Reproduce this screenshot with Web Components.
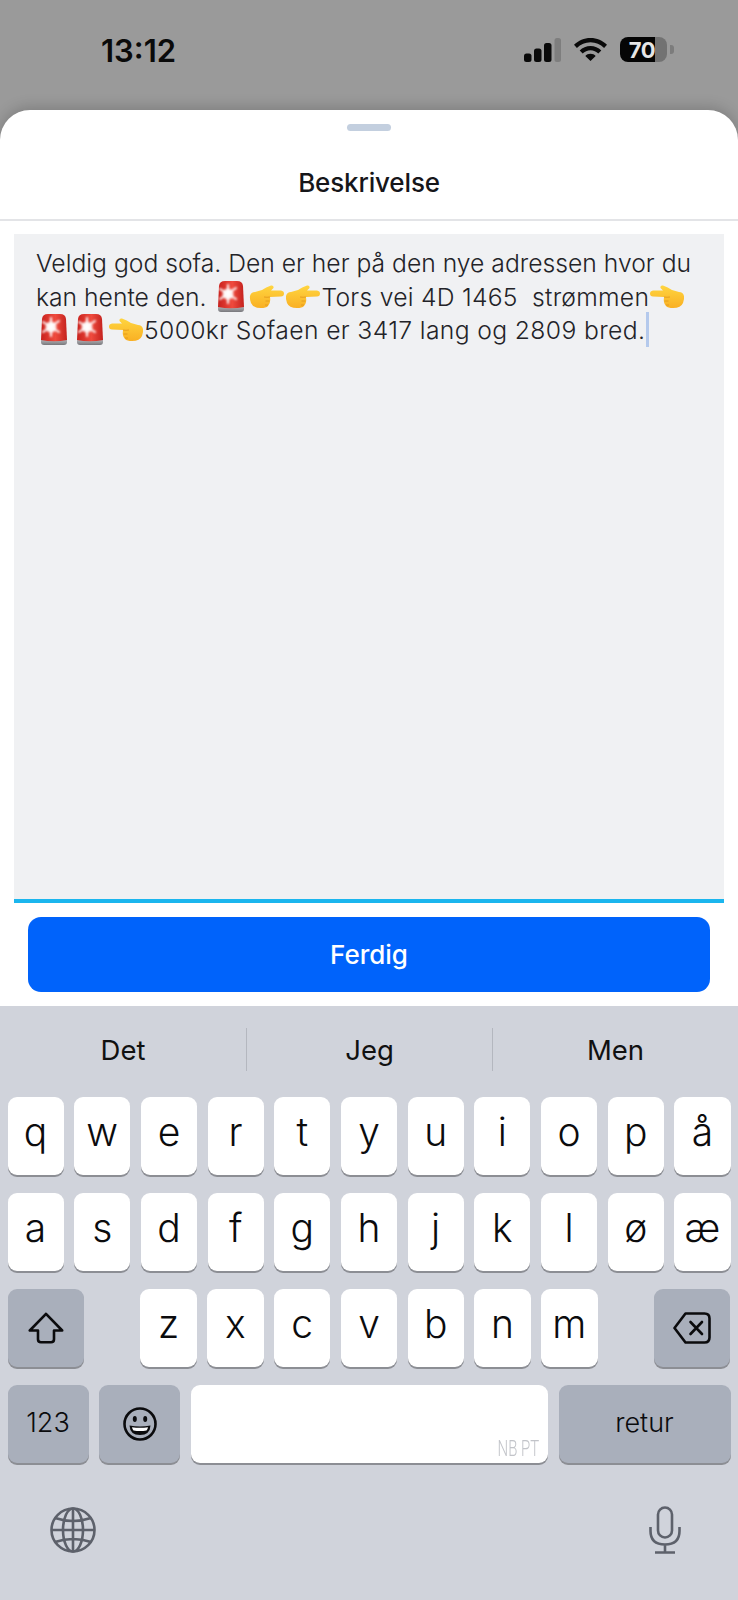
<!DOCTYPE html>
<html lang="nb">
<head>
<meta charset="utf-8">
<title>Beskrivelse</title>
<style>
  html, body { margin: 0; padding: 0; }
  body { width: 738px; height: 1600px; overflow: hidden; background: #9a9a9a; font-family: Inter, "Noto Sans", sans-serif; }
  app-screen { width: 738px; height: 1600px; }
</style>
</head>
<body>
<app-screen>
  <status-bar slot="status" time="13:12" battery="70"></status-bar>
  <bottom-sheet slot="sheet" heading="Beskrivelse" action="Ferdig">
    Veldig god sofa. Den er her på den nye adressen hvor du<br>kan hente den. <chat-emoji name="siren"></chat-emoji><chat-emoji name="right"></chat-emoji><chat-emoji name="right"></chat-emoji><span style="letter-spacing: .25px">Tors vei 4D 1465 &nbsp;strømmen</span><chat-emoji name="left"></chat-emoji><br><chat-emoji name="siren"></chat-emoji><chat-emoji name="siren"></chat-emoji><chat-emoji name="left"></chat-emoji><span style="letter-spacing: .37px">5000kr Sofaen er 3417 lang og 2809 bred.</span><text-caret></text-caret>
  </bottom-sheet>
  <ios-keyboard slot="keyboard"></ios-keyboard>
</app-screen>

<script>
const HAND = `
  <defs>
    <linearGradient id="skin" x1="0" x2="0" y1="0" y2="1">
      <stop offset="0" stop-color="#ffd53f"/><stop offset="1" stop-color="#f9b024"/>
    </linearGradient>
  </defs>
  <path d="M1 17Q2 13 6 13L13 11Q17 8 22 6.500Q25 6 24.500 9L22 11.500H32Q35 12 35 14.500Q35 17.500 32 17.500L21 18Q22 24 19 27Q17 29 12 29Q4 29 2 24Q.500 20 1 17z" fill="url(#skin)"/>
  <path d="M21 18q-3 .500-6 0M20.500 22h-4M19 26h-3" stroke="#e0941a" stroke-width=".8" fill="none"/>`

const EMOJI = {
  siren: `
    <svg viewBox="0 0 36 36" width="36" height="36">
      <defs>
        <linearGradient id="dome" x1="0" x2="1" y1="0" y2="0">
          <stop offset="0" stop-color="#c8211d"/><stop offset=".55" stop-color="#ef4a3d"/><stop offset="1" stop-color="#c4221e"/>
        </linearGradient>
        <linearGradient id="base" x1="0" x2="0" y1="0" y2="1">
          <stop offset="0" stop-color="#c9c9cc"/><stop offset="1" stop-color="#77777b"/>
        </linearGradient>
        <filter id="soft" x="-30%" y="-30%" width="160%" height="160%"><feGaussianBlur stdDeviation=".9"/></filter>
      </defs>
      <path d="M5 26v4q0 3 3 3h20q3 0 3-3v-4z" fill="url(#base)"/>
      <path d="M5 28 6 7Q6.500 2 12 2H24Q29.500 2 30 7L31 28Q18 30.500 5 28z" fill="url(#dome)"/>
      <g filter="url(#soft)">
        <circle cx="15" cy="15" r="5.500" fill="#fff" opacity=".9"/>
        <path d="M15 6v18M7 10l16 10M23 9 7 20" stroke="#fff" stroke-width="2" stroke-linecap="round"/>
      </g>
    </svg>`,
  right: `<svg viewBox="0 0 36 36" width="36" height="36">${HAND}</svg>`,
  left: `<svg viewBox="0 0 36 36" width="36" height="36"><g transform="matrix(-1 0 0 1 36 0)">${HAND}</g></svg>`
}

const KEY_ICONS = {
  shift: `
    <svg viewBox="0 0 36 32" width="36" height="32" fill="none" stroke="#0b0b0d" stroke-width="2.600" stroke-linejoin="round">
      <path d="M18 1.800 1.800 18.500H10v8.700q0 3 3 3h10q3 0 3-3v-8.700h8.200z"/>
    </svg>`,
  backspace: `
    <svg viewBox="0 0 38 32" width="38" height="32" fill="none" stroke="#0b0b0d" stroke-width="2.600" stroke-linejoin="round" stroke-linecap="round">
      <path d="M12.500 1.500h19q5 0 5 5v19q0 5-5 5h-19L1.500 16z"/>
      <path d="M17.500 10 29 22M29 10 17.500 22"/>
    </svg>`,
  emoji: `
    <svg viewBox="0 0 34 34" width="34" height="34">
      <circle cx="17" cy="17" r="15.500" fill="none" stroke="#0b0b0d" stroke-width="2.600"/>
      <ellipse cx="11.800" cy="12" rx="2" ry="3" fill="#0b0b0d"/>
      <ellipse cx="22.200" cy="12" rx="2" ry="3" fill="#0b0b0d"/>
      <path d="M6.500 18.500q10.500 2 21 0q-.5 9.500-10.500 9.500t-10.500-9.500z" fill="#0b0b0d"/>
      <path d="M9 20.200q8 1.300 16 0q-.5 2.600-1.500 3.300q-6.500 1-13 0q-1-.7-1.500-3.300z" fill="#fff"/>
    </svg>`,
  globe: `
    <svg viewBox="0 0 46 46" width="46" height="46" fill="none" stroke="#5d616b" stroke-width="2.600">
      <circle cx="23" cy="23" r="21.500"/>
      <ellipse cx="23" cy="23" rx="10" ry="21.500"/>
      <path d="M23 1.500v43M1.500 23h43M5 11q18 6 36 0M5 35q18-6 36 0"/>
    </svg>`,
  mic: `
    <svg viewBox="0 0 32 48" width="32" height="48" fill="none" stroke="#5d616b" stroke-width="2.600" stroke-linecap="butt">
      <rect x="9" y="1.500" width="14" height="30" rx="7"/>
      <path d="M1.500 21v4q0 13.500 14.500 13.500T30.500 25v-4M16 38.500v7.500M6 46.500h20"/>
    </svg>`
}

function statusStyle() {
  return `
  <style>
    :host { display: flex; align-items: flex-start; justify-content: space-between; box-sizing: border-box; height: 110px; padding: 37px 64px 0 101px; font-family: Inter, sans-serif; color: #0a0a0a; }
    .time { font-size: 31px; line-height: 27px; font-weight: 600; letter-spacing: 0; }
    .icons { display: flex; align-items: center; gap: 13px; height: 25px; }
    .battery { position: relative; display: flex; align-items: center; gap: 3px; }
    .cell { position: relative; display: flex; align-items: center; justify-content: center; box-sizing: border-box; width: 47px; height: 25px; border-radius: 8px; background: linear-gradient(90deg, #050505 0 74%, #727272 74% 100%); color: #e6e6e6; font-size: 22px; font-weight: 700; letter-spacing: -.5px; padding-right: 3px; }
    .nub { width: 4px; height: 9px; border-radius: 0 3px 3px 0; background: #7c7c7c; }
  </style>`
}

class StatusBar extends HTMLElement {
  constructor() {
    super()
    const shadowRoot = this.attachShadow({ mode: 'open' })
    shadowRoot.innerHTML = statusStyle() + `
      <span class="time">${this.getAttribute('time')}</span>
      <div class="icons">
        <svg width="37" height="24" viewBox="0 0 37 24">
          <rect x="0" y="15.500" width="7.500" height="8.500" rx="2.500" fill="#0a0a0a"/>
          <rect x="10" y="10.500" width="7.500" height="13.500" rx="2.500" fill="#0a0a0a"/>
          <rect x="20" y="5" width="7.500" height="19" rx="2.500" fill="#0a0a0a"/>
          <rect x="30.500" y="0" width="6.500" height="24" rx="2.500" fill="#7e7e7e"/>
        </svg>
        <svg width="33" height="23" viewBox="0 0 33 23" fill="#0a0a0a">
          <path d="M16.500 0C10 0 4.500 2.500 0 6.800l2.900 3.100C6.600 6.400 11.300 4.300 16.500 4.300s9.900 2.100 13.600 5.600L33 6.800C28.500 2.500 23 0 16.500 0z"/>
          <path d="M16.500 8C12.300 8 8.600 9.600 5.700 12.400l3 3.100c2-1.900 4.700-3.200 7.800-3.200s5.800 1.300 7.800 3.200l3-3.100C24.400 9.600 20.700 8 16.500 8z"/>
          <path d="M16.500 15.800c-2.100 0-3.900.8-5.200 2.100l5.200 5.100 5.200-5.100c-1.300-1.300-3.100-2.100-5.200-2.100z"/>
        </svg>
        <div class="battery">
          <div class="cell">${this.getAttribute('battery')}</div>
          <div class="nub"></div>
        </div>
      </div>`
  }
}

function sheetStyle() {
  return `
  <style>
    :host { display: flex; flex-direction: column; background: #fff; border-radius: 30px 30px 0 0; box-shadow: 0 -3px 14px rgba(0, 0, 0, .18); font-family: Inter, sans-serif; }
    header { display: flex; flex-direction: column; align-items: center; box-sizing: border-box; height: 111px; padding-top: 14px; border-bottom: 2px solid #e3e4e7; }
    .handle { width: 44px; height: 7px; border-radius: 4px; background: #c3cfdf; }
    h1 { margin: 37px 0 0; font-size: 26px; line-height: 30px; font-weight: 500; color: #16161a; letter-spacing: -.15px; }
    .field { box-sizing: border-box; height: 669px; margin: 13px 14px 0; padding: 13px 22px 0 22px; background: #f0f1f3; border-bottom: 4px solid #1bb6ee; color: #232328; font-size: 24.700px; font-weight: 350; line-height: 33.500px; white-space: nowrap; }
    button { display: block; height: 75px; margin: 14px 28px; border: 0; border-radius: 13px; background: #0063fb; color: #fff; font: 500 26px Inter, sans-serif; }
  </style>`
}

class BottomSheet extends HTMLElement {
  constructor() {
    super()
    const shadowRoot = this.attachShadow({ mode: 'open' })
    shadowRoot.innerHTML = sheetStyle() + `
      <header>
        <div class="handle"></div>
        <h1>${this.getAttribute('heading')}</h1>
      </header>
      <div class="field"><slot></slot></div>
      <button type="button">${this.getAttribute('action')}</button>`
  }
}

class ChatEmoji extends HTMLElement {
  constructor() {
    super()
    const shadowRoot = this.attachShadow({ mode: 'open' })
    shadowRoot.innerHTML = `
      <style>
        :host { display: inline-block; width: 36px; height: 20px; vertical-align: -1px; }
        svg { display: block; margin-top: -8px; }
      </style>` + EMOJI[this.getAttribute('name')]
  }
}

class TextCaret extends HTMLElement {
  constructor() {
    super()
    const shadowRoot = this.attachShadow({ mode: 'open' })
    shadowRoot.innerHTML = `
      <style>
        :host { display: inline-block; width: 3px; height: 20px; margin-left: 1px; vertical-align: -1px; position: relative; }
        i { position: absolute; left: 0; top: -8px; width: 3px; height: 35px; background: #b4c9ec; }
      </style>
      <i></i>`
  }
}

class KeyCap extends HTMLElement {
  static get observedAttributes() {
    return ['icon']
  }
  constructor() {
    super()
    const shadowRoot = this.attachShadow({ mode: 'open' })
    const icon = this.getAttribute('icon')
    shadowRoot.innerHTML = `
      <style>
        :host { position: relative; display: flex; align-items: center; justify-content: center; height: 78px; border-radius: 9px; background: #fff; box-shadow: 0 2px 0 #8c8e94; color: #0b0b0d; font-size: 39px; font-weight: 350; line-height: 1; padding-bottom: 9px; box-sizing: border-box; }
        :host([dark]) { background: #a9afbb; padding-bottom: 0; }
        :host([small]) { font-size: 27px; font-weight: 350; padding-bottom: 3px; }
        svg { display: block; }
      </style>
      <slot></slot>${icon ? KEY_ICONS[icon] : ''}`
  }
}

function keyboardStyle() {
  return `
  <style>
    :host { display: flex; flex-direction: column; flex: 1; background: #d0d3db; font-family: Inter, sans-serif; }
    .suggest { display: grid; grid-template-columns: repeat(3, 1fr); height: 91px; padding-top: 22px; box-sizing: border-box; }
    .suggest span { height: 43px; display: flex; align-items: center; justify-content: center; color: #111; font-size: 27.500px; font-weight: 380; border-left: 1px solid #b4b7bf; }
    .suggest span:first-child { border-left: 0; }
    .rows { display: flex; flex-direction: column; gap: 18px; padding: 0 7.500px; }
    .letters { display: grid; grid-template-columns: repeat(11, 1fr); gap: 10.500px; }
    .row3 { display: flex; justify-content: space-between; }
    .row3 > key-cap { width: 76px; }
    .mid { display: grid; grid-template-columns: repeat(7, 56.300px); gap: 10.500px; }
    .row4 { display: flex; gap: 10.500px; }
    .row4 .fn { width: 81px; }
    .row4 .space { flex: 1; }
    .row4 .ret { width: 172px; }
    .lang { position: absolute; right: 9px; bottom: 2px; font: 300 22px Roboto, sans-serif; transform: scaleX(.68); transform-origin: right; color: #c2c4c9; }
    .bottom { display: flex; justify-content: space-between; align-items: center; padding: 43px 57px 0 50px; }
  </style>`
}

class IosKeyboard extends HTMLElement {
  constructor() {
    super()
    const shadowRoot = this.attachShadow({ mode: 'open' })
    const keys = list => [...list].map(c => `<key-cap>${c}</key-cap>`).join('')
    shadowRoot.innerHTML = keyboardStyle() + `
      <div class="suggest"><span>Det</span><span>Jeg</span><span>Men</span></div>
      <div class="rows">
        <div class="letters">${keys('qwertyuiopå')}</div>
        <div class="letters">${keys('asdfghjkløæ')}</div>
        <div class="row3">
          <key-cap dark icon="shift"></key-cap>
          <div class="mid">${keys('zxcvbnm')}</div>
          <key-cap dark icon="backspace"></key-cap>
        </div>
        <div class="row4">
          <key-cap dark small class="fn">123</key-cap>
          <key-cap dark icon="emoji" class="fn"></key-cap>
          <key-cap class="space"><span class="lang">NB PT</span></key-cap>
          <key-cap dark small class="ret">retur</key-cap>
        </div>
      </div>
      <div class="bottom">${KEY_ICONS.globe}${KEY_ICONS.mic}</div>`
  }
}

class AppScreen extends HTMLElement {
  constructor() {
    super()
    const shadowRoot = this.attachShadow({ mode: 'open' })
    shadowRoot.innerHTML = `
      <style>
        :host { display: flex; flex-direction: column; background: #9a9a9a; }
      </style>
      <slot name="status"></slot>
      <slot name="sheet"></slot>
      <slot name="keyboard"></slot>`
  }
}

customElements.define('status-bar', StatusBar)
customElements.define('bottom-sheet', BottomSheet)
customElements.define('chat-emoji', ChatEmoji)
customElements.define('text-caret', TextCaret)
customElements.define('key-cap', KeyCap)
customElements.define('ios-keyboard', IosKeyboard)
customElements.define('app-screen', AppScreen)
</script>
</body>
</html>
